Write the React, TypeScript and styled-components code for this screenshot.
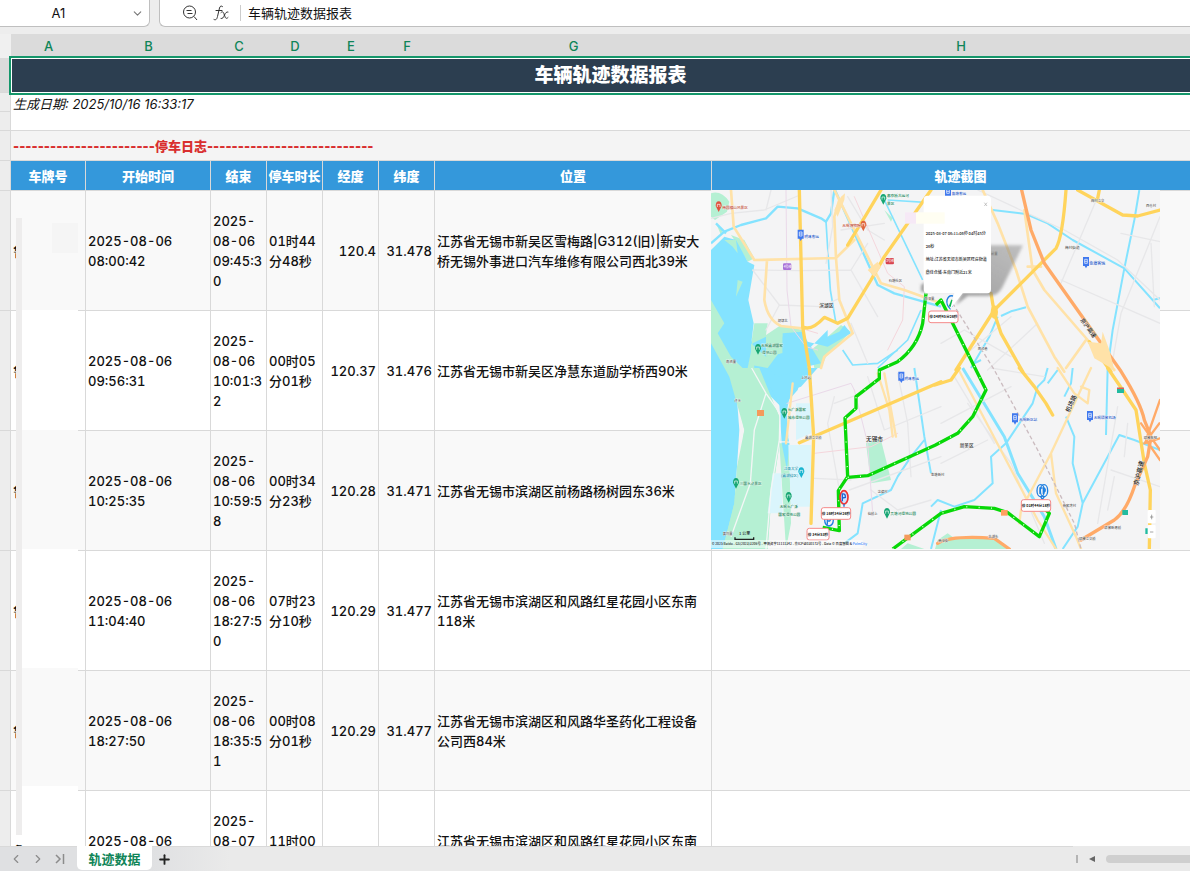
import React from "react";
import styled, { createGlobalStyle } from "styled-components";
import { ChevronDown, ChevronLeft, ChevronRight, Plus } from "lucide-react";

const GlobalStyle = createGlobalStyle`
  * { box-sizing: border-box; }
  body {
    margin: 0;
    background: #fff;
    color: #111;
    font-family: Inter, "Noto Sans CJK SC", sans-serif;
    font-size: 13px;
  }
  button, input { font: inherit; color: inherit; border: 0; padding: 0; background: none; }
`;

const GREEN = "#0f8558";
const LINE = "#d9d9d9";

const App = styled.div`
  display: flex;
  flex-direction: column;
  height: 100vh;
  overflow: hidden;
  background: #ededed;
`;

const FormulaBar = styled.header`
  display: flex;
  flex: none;
  gap: 9px;
  height: 34px;
  padding-bottom: 7px;
`;

const NameBox = styled.div`
  display: flex;
  align-items: center;
  width: 150px;
  background: #fff;
  border: solid #bfbfbf;
  border-width: 0 1px 1px 0;
  border-radius: 0 0 6px 0;
`;

const NameInput = styled.input`
  flex: 1;
  min-width: 0;
  padding-right: 8px;
  text-align: center;
`;

const IconButton = styled.button<{ $width: number }>`
  display: flex;
  align-items: center;
  justify-content: center;
  width: ${(p) => p.$width}px;
`;

const FormulaBox = styled.div`
  display: flex;
  flex: 1;
  align-items: center;
  padding-left: 15px;
  background: #fff;
  border: solid #bfbfbf;
  border-width: 0 0 1px 1px;
  border-radius: 0 0 0 6px;
`;

const FormulaInput = styled.input`
  flex: 1;
  height: 16px;
  margin-left: 4px;
  padding: 0 0 2px 7px;
  border-left: 1px solid #ccc;
`;

const Sheet = styled.main`
  flex: 1;
  min-height: 0;
  overflow: hidden;
`;

const Grid = styled.table`
  position: relative;
  width: calc(100% + 20px);
  table-layout: fixed;
  border-collapse: separate;
  border-spacing: 0;
`;

const Corner = styled.th`
  background: #f0f0f0;
`;

const ColumnHead = styled.th`
  height: 24px;
  padding: 0;
  background: #dbdbdb;
  color: ${GREEN};
  font-size: 13px;
  font-weight: 500;
`;

const RowHead = styled.th<{ $active?: boolean }>`
  padding: 0;
  background: ${(p) => (p.$active ? "#dbdbdb" : "#ededed")};
  border: solid ${LINE};
  border-width: 0 1px 1px 0;
`;

const TitleCell = styled.td`
  position: relative;
  z-index: 1;
  height: 35px;
  padding: 0;
  border: 1px solid #fff;
  outline: 2px solid #14966a;
  background: #2c3e50;
  color: #fff;
  font-size: 19px;
  font-weight: 900;
  line-height: 24px;
  text-align: center;
`;

const Row = styled.tr<{ $height: number }>`
  height: ${(p) => p.$height}px;
`;

const DateCell = styled.td`
  padding: 2px;
  background: #fff;
  border-bottom: 1px solid ${LINE};
  font-style: italic;
  font-size: 13px;
  line-height: 18px;
  vertical-align: top;
`;

const SectionCell = styled.td`
  padding: 0 2px 1px;
  background: #f4f4f4;
  border-bottom: 1px solid ${LINE};
  color: #d92f2f;
  font-weight: 900;
`;

const FieldHead = styled.th`
  padding: 0 0 1px;
  background: #3498db;
  border: solid ${LINE};
  border-width: 0 1px 1px 0;
  color: #fff;
  font-weight: 900;
  white-space: nowrap;
`;

const Cell = styled.td<{ $striped: boolean; $right?: boolean }>`
  position: relative;
  padding: 0 2px;
  background: ${(p) => (p.$striped ? "#f9f9f9" : "#fff")};
  border: solid ${LINE};
  border-width: 0 1px 1px 0;
  font-weight: 500;
  font-variant-numeric: tabular-nums;
  line-height: 20px;
  text-align: ${(p) => (p.$right ? "right" : "left")};
  white-space: nowrap;
`;

const Line = styled.div``;

const PlateMask = styled.span<{ $striped: boolean; $top: number; $height: number }>`
  position: absolute;
  top: ${(p) => p.$top}px;
  left: 5px;
  width: 62px;
  height: ${(p) => p.$height}px;
  background: ${(p) => (p.$striped ? "#f9f9f9" : "#fff")};
  border-left: 6px solid #eeeded;
`;

const PlatePatch = styled.span`
  position: absolute;
  top: 5px;
  right: 0;
  width: 26px;
  height: 30px;
  background: #f5f5f5;
`;

const MapPicture = styled.svg`
  position: absolute;
  z-index: 2;
  top: -1px;
  left: -1px;
  width: 449px;
  height: 359px;
  font-family: "Noto Sans CJK SC", sans-serif;
`;

const Label = styled.text<{ $size?: number }>`
  font-size: ${(p) => p.$size ?? 14}px;
  font-weight: 500;
  stroke: #fff;
  stroke-width: 1px;
  paint-order: stroke;
`;

const Footer = styled.footer`
  display: flex;
  flex: none;
  height: 25px;
  background: linear-gradient(90deg, #dfe0e2 0, #dfe0e2 150px, #eaeaea 230px);
`;

const SheetNav = styled.nav`
  display: flex;
  flex: 1;
  border-top: 1px solid ${LINE};
  padding-left: 5px;
  color: #8c8c8c;
`;

const SheetTab = styled.button`
  width: 75px;
  height: 24px;
  margin: -1px 0 0 6px;
  background: #fff;
  border-radius: 0 0 5px 5px;
  color: ${GREEN};
  font-weight: 700;
`;

const ScrollArea = styled.div`
  display: flex;
  align-items: center;
  width: 117px;
  gap: 11px;
  padding-left: 3px;
`;

const SplitHandle = styled.span`
  width: 2px;
  height: 8px;
  background: #b4b4b4;
`;

const ScrollThumb = styled.span`
  flex: 1;
  height: 8px;
  background: #cfcfcf;
  border-radius: 4px 0 0 4px;
`;

const columns = [
  { letter: "A", width: 75, field: "车牌号" },
  { letter: "B", width: 125, field: "开始时间" },
  { letter: "C", width: 56, field: "结束" },
  { letter: "D", width: 56, field: "停车时长" },
  { letter: "E", width: 56, field: "经度" },
  { letter: "F", width: 56, field: "纬度" },
  { letter: "G", width: 277, field: "位置" },
  { letter: "H", width: 0, field: "轨迹截图" },
];

const records = [
  { start: ["2025-08-06", "08:00:42"], end: ["2025-", "08-06", "09:45:3", "0"], stay: ["01时44", "分48秒"], lng: "120.4", lat: "31.478", place: ["江苏省无锡市新吴区雪梅路|G312(旧)|新安大", "桥无锡外事进口汽车维修有限公司西北39米"] },
  { start: ["2025-08-06", "09:56:31"], end: ["2025-", "08-06", "10:01:3", "2"], stay: ["00时05", "分01秒"], lng: "120.37", lat: "31.476", place: ["江苏省无锡市新吴区净慧东道励学桥西90米"] },
  { start: ["2025-08-06", "10:25:35"], end: ["2025-", "08-06", "10:59:5", "8"], stay: ["00时34", "分23秒"], lng: "120.28", lat: "31.471", place: ["江苏省无锡市滨湖区前杨路杨树园东36米"] },
  { start: ["2025-08-06", "11:04:40"], end: ["2025-", "08-06", "18:27:5", "0"], stay: ["07时23", "分10秒"], lng: "120.29", lat: "31.477", place: ["江苏省无锡市滨湖区和风路红星花园小区东南", "118米"] },
  { start: ["2025-08-06", "18:27:50"], end: ["2025-", "08-06", "18:35:5", "1"], stay: ["00时08", "分01秒"], lng: "120.29", lat: "31.477", place: ["江苏省无锡市滨湖区和风路华圣药化工程设备", "公司西84米"] },
  { start: ["2025-08-06", "18:42:10"], end: ["2025-", "08-07", "05:42:1", "5"], stay: ["11时00", "分05秒"], lng: "120.29", lat: "31.477", place: ["江苏省无锡市滨湖区和风路红星花园小区东南", "118米"] },
];

// top and height of the cover over each licence plate
const masks = [
  [27, 92],
  [-1, 120],
  [-1, 119],
  [-2, 119],
  [-3, 119],
  [-5, 49],
];

const Lines = ({ items }: { items: string[] }) => (
  <>
    {items.map((t, i) => (
      <Line key={i}>{t}</Line>
    ))}
  </>
);

type Road = [color: string, width: number, d: string];

const roads: Road[] = [
  // minor streets
  ["#e7e7e9", 4, "M0 85L60 70L160 60L260 18M130 240L265 242L420 240L500 380M165 60L180 0M360 0L365 110L345 220M410 20L470 120L520 150M125 240L205 345L330 350L385 325M205 345L165 420M420 240L470 160M390 120L520 100M420 400L470 520"],
  ["#e7e7e9", 4, "M800 0L950 70L1060 120L1220 210L1347 330M1050 270L1347 400M1230 130L1347 155M1160 20L1050 280M1347 80L1230 370L1200 540M1320 160L1330 350M780 480L900 380M830 540L980 400M900 500L760 420L690 460"],
  ["#e7e7e9", 4, "M370 640L450 610M310 865L420 870M370 620L350 700L385 900M560 550L590 700L600 860M415 900L690 800M480 900L560 960L660 930M470 560L520 720L690 650M690 820L830 750M730 560L850 760M770 640L900 820L1000 1060M1200 840L1347 890M1210 860L1190 960M1220 650L1160 1000M690 700L900 590M840 534L1000 560M1250 700L1240 800"],
  ["#ead9e9", 3, "M225 0L228 300L240 410L285 470L320 480M228 640L420 580L430 600M430 600L470 760L485 970"],
  ["#f4d6dc", 3, "M430 20L530 250L580 290L575 390L530 480M270 415L320 430M310 790L480 770L560 730"],
  // pale yellow arteries
  ["#ffe2a8", 8, "M60 0L68 110L130 210L375 204L430 150M168 210L160 330Q170 390 210 408L280 416M375 204L385 330L425 430L340 500L330 534M385 30L370 80L375 204M370 0L510 280L580 300L690 340M485 240L510 220"],
  ["#ffe2a8", 8, "M815 0L860 100L915 240L950 350L1030 500L1060 545M940 60L965 240L1000 300L1130 450L1210 540M950 230L990 230M1125 450L1065 534"],
  ["#ffe2a8", 7, "M520 550L555 740M500 550L535 660L545 740M245 580L225 760M740 534L980 990L1035 1077M1140 534L1020 790L930 960L925 1000M1020 790L1035 910L1095 1040L1110 1077M1040 534L1090 610L1130 640L1135 600L1110 590"],
  // main yellow roads
  ["#ffd45c", 10, "M265 0L275 410L295 534M275 410Q300 425 340 382L380 400L410 385L480 270L520 200L660 0M510 0L465 75L410 165M1065 0Q1055 140 1035 175L960 250L850 360L735 540M840 310L850 370L870 430L935 545M1100 0L1235 75L1280 78L1347 60M1165 0L1160 25"],
  ["#ffd45c", 10, "M295 534L308 740L300 1000M265 758L690 575M672 585L720 570L745 534M925 534L970 590L1005 640L1025 675M1190 534L1235 600L1275 660L1300 820L1318 900L1315 1077M1135 455L1200 545"],
  // expressways
  ["#ffaa68", 10, "M932 0L960 120L1000 220L1110 375L1230 544Q1290 640 1300 690L1320 740L1310 800L1270 890Q1245 965 1210 990L1110 1050M680 1060Q720 1035 850 1045L895 1077"],
  ["#ffaa68", 7, "M1347 630L1305 750L1347 810M1347 745L1300 760L1345 700M1290 700L1347 780"],
];

const rivers: Road[] = [
  ["#84e3ff", 7, "M0 160L40 125L90 105L165 85L200 50L260 55L330 85L345 95L360 70L370 0M15 100L45 130M372 0L500 285L550 310L690 350"],
  ["#84e3ff", 5, "M345 95L358 300L375 400M520 30L635 270M630 360L590 450L500 534M395 480L425 525L500 520L560 480M530 30L690 40"],
  ["#84e3ff", 6, "M845 60L945 72L1010 100L1085 150L1240 235L1347 355M1285 0L1270 90L1240 235L1205 420L1190 534M1325 330L1347 325M860 380L835 440L780 534M790 520L810 510M870 378L900 364L945 352"],
  ["#84e3ff", 6, "M1010 534L1000 570L980 590L965 640L885 760L840 800L845 880L790 930L730 950L680 930L660 950M1040 540L1010 580M1085 534L1080 580L1060 620M1065 680L1090 740L1085 820L1115 940L1100 1010L1055 1077M1115 940L1225 735L1270 750L1347 780M1190 534L1185 735M690 960L660 1077"],
  ["#84e3ff", 9, "M755 534L880 740L920 850L1000 980L1035 1077"],
  ["#84e3ff", 6, "M610 534L640 740L660 850M640 750L600 800L560 860L540 900L455 940L440 1030L400 1060"],
];

const trackPath =
  "M645 310L635 400Q620 470 560 515L505 540L505 566L435 620L435 655L402 684L410 860L382 902L385 1022L335 1012M410 862L470 857L672 766L740 730L785 680L825 600L690 330L675 345M545 1077L690 970L760 950L850 955L890 968L985 1040L1015 970L1005 960";

type MapText = [x: number, y: number, text: string, color: string, size?: number];

const mapTexts: MapText[] = [
  [34, 56, "梅园横山风景区", "#c04a33", 11], [528, 22, "惠农桥古运河", "#0f8052", 11], [528, 44, "景区", "#0f8052", 11],
  [394, 112, "无锡博物院", "#c04a33", 11], [280, 143, "明珠客运", "#2c5bc8", 11], [325, 351, "滨湖区", "#333"],
  [200, 395, "胡埭北", "#555", 10], [533, 277, "石塘社区", "#555", 10], [150, 470, "无锡蠡湖国家", "#0f8052", 11],
  [153, 492, "湿地公园", "#0f8052", 11], [45, 520, "南池里", "#555", 10], [640, 330, "南深里", "#555", 10],
  [722, 14, "鱼塘客运", "#2c5bc8", 11], [1140, 36, "梅村立交", "#555", 10], [1305, 50, "西仓村", "#555", 10],
  [1062, 178, "梅村街道", "#555", 11], [1135, 225, "鱼塘客运", "#2c5bc8", 12], [800, 480, "周泾巷", "#555", 10],
  [830, 196, "坊前里", "#555", 10],
  [270, 566, "上风岩", "#555", 10], [580, 570, "明珠客运", "#2c5bc8", 11], [70, 636, "许水", "#555", 10],
  [230, 662, "长广溪国家", "#0f8052", 11], [230, 688, "城市湿地公园", "#0f8052", 11], [282, 748, "蠡湖立交桥", "#555", 10],
  [465, 754, "无锡市", "#222", 17], [218, 840, "江南大学", "#0c93ab", 11], [210, 862, "(蠡湖校区)", "#0c93ab", 11],
  [86, 884, "三国水浒景区", "#0f8052", 11], [206, 954, "无锡长广溪", "#0f8052", 11], [202, 978, "国家湿地公园", "#0f8052", 11],
  [500, 908, "达德村", "#555", 10], [470, 975, "仙桥上", "#555", 10], [538, 976, "贡塘河湿地公园", "#0f8052", 11],
  [35, 1034, "黄坞里", "#555", 10], [660, 858, "金塘新村", "#555", 10], [746, 772, "新吴区", "#333"],
  [924, 692, "无锡新区站", "#2c5bc8", 11], [1148, 688, "无锡硕放机场", "#2c5bc8", 11], [1298, 748, "硕放枢纽", "#555", 10],
  [1055, 950, "杨家湾村", "#555", 10], [1180, 1017, "硕放新港桥", "#555", 10], [1104, 1050, "硕放立交桥", "#555", 10],
  [832, 1045, "北湖头", "#555", 10], [682, 1056, "商业街", "#555", 10],
];

const pins: [number, number, string][] = [
  [23, 48, "#e0523f"], [457, 106, "#e0663f"], [517, 26, "#17a673"], [141, 476, "#17a673"], [220, 668, "#17a673"],
  [75, 878, "#17a673"], [233, 920, "#17a673"], [528, 968, "#17a673"], [271, 846, "#18b4cf"],
];

const stations: [number, number][] = [
  [269, 134], [711, 6], [1125, 216], [571, 560], [912, 685], [1137, 678],
];

const stops: [number, number, string][] = [
  [653, 363, "停 04时45分26秒"], [331, 953, "停 16时34分26秒"], [288, 1015, "停 34分53秒"], [931, 929, "停 01时44分18秒"],
];

const RouteMap = () => (
  <MapPicture viewBox="0 0 1347 1077" role="img" aria-label="轨迹截图" preserveAspectRatio="none">
    <rect width="1347" height="1077" fill="#f4f4f5" />
    <g fill="#b5f0d3">
      <path d="M0 10Q30 0 55 35L48 65L12 90L0 80ZM60 135L100 150L130 205L110 215L70 150ZM520 60L545 85L555 60L540 95ZM15 100L35 120L30 135Z" />
      <path d="M130 400L170 400L165 435L210 405L275 420L290 534L330 534L345 500L420 425L390 405L350 440L300 480L310 534L220 560L110 530Z" />
      <path d="M0 390L30 460L60 420L80 500L140 534L205 680L205 760L180 940L170 1077L30 1077L75 900L100 720L60 534L0 470Z" />
      <path d="M465 760L510 750L540 870L480 880ZM205 760L235 760L240 1000L225 1077ZM680 1050L710 1030L730 1045L850 1045L890 1077L672 1077ZM590 1060L640 1077L570 1077Z" />
    </g>
    <g fill="#84e3ff">
      <path d="M0 180L40 140L75 150L110 215L130 225L112 330L128 400L122 450L130 534L160 600L210 650L220 740L232 740L225 640L260 600L270 570L245 540L330 520L300 470L350 420L350 440L385 425L400 405L420 430L350 470L290 455L275 425L215 430L215 490L165 500L165 440L125 460L110 534L60 534L75 590L85 720L78 830L70 940L45 1040L35 1077L0 1077Z" />
      <path d="M145 534L205 640L212 760L228 840L235 760L222 690L240 600L270 590L320 534Z" />
      <path d="M215 440L278 425L290 534L200 560L165 534L170 500L215 490Z" />
    </g>
    <g fill="#b5f0d3">
      <path d="M0 330L40 400L20 430L60 500L95 534L145 534L205 680L208 750L180 930L170 1077L35 1077L70 940L78 830L100 720L55 560L0 460ZM40 150L75 150L80 190L65 170ZM80 270L95 275L75 320ZM120 460L165 500L210 480L170 534L120 525Z" />
    </g>
    <path d="M232 765L300 765L300 950L240 950ZM255 640L300 640L300 730L255 750ZM185 850L210 850L215 970L170 970Z" fill="#daf5fc" />
    {rivers.map(([color, width, d], i) => (
      <path key={i} d={d} stroke={color} strokeWidth={width} fill="none" strokeLinejoin="round" />
    ))}
    <path d="M122 534L165 610L207 670L205 750L180 900L165 1077M165 610L130 720L118 880L60 1040M205 755L265 758" stroke="#f4f6f6" strokeWidth="4" fill="none" />
    {roads.map(([color, width, d], i) => (
      <path key={i} d={d} stroke={color} strokeWidth={width} fill="none" strokeLinejoin="round" strokeLinecap="round" />
    ))}
    <g fill="#ffe2a8">
      <path d="M370 60L390 20L402 10L400 30L380 80ZM470 240L500 215L510 230L490 260ZM1130 455L1170 460L1175 425L1195 480L1210 540L1150 505Z" />
    </g>
    <ellipse cx="850" cy="366" rx="11" ry="20" fill="#ffd45c" />
    <path d="M725 340L850 540L980 780L1090 1000L1110 1077" stroke="#cbbcc0" strokeWidth="4" strokeDasharray="12 8" fill="none" />
    <path d={trackPath} stroke="#07d807" strokeWidth="10" fill="none" strokeLinejoin="round" />
    <path d={trackPath} stroke="#e8ffe8" strokeWidth="4" strokeDasharray="3 34" fill="none" />
    <g>
      {pins.map(([x, y, color]) => (
        <g key={`${x}-${y}`}>
          <path d={`M${x} ${y + 18}L${x - 9} ${y}A9 14 0 1 1 ${x + 9} ${y}Z`} fill={color} />
          <path d={`M${x - 4} ${y + 3}V${y - 5}H${x + 4}V${y + 3}`} stroke="#fff" strokeWidth="2" fill="none" />
        </g>
      ))}
      {stations.map(([x, y]) => (
        <g key={`${x}-${y}`}>
          <path d={`M${x - 9} ${y - 15}H${x + 9}V${y + 12}H${x + 4}L${x} ${y + 19}L${x - 4} ${y + 12}H${x - 9}Z`} fill="#3f78ee" />
          <path d={`M${x - 4} ${y - 8}H${x + 4}V${y + 4}H${x - 4}ZM${x - 4} ${y - 2}H${x + 4}`} stroke="#fff" strokeWidth="2" fill="none" />
        </g>
      ))}
    </g>
    <g>
      <rect x="216" y="220" width="25" height="20" rx="4" fill="#a971d8" />
      <rect x="524" y="204" width="25" height="19" rx="4" fill="#d8434f" />
      <rect x="138" y="660" width="21" height="18" fill="#f49a5b" />
      <rect x="580" y="1034" width="19" height="17" fill="#f49a5b" />
      <rect x="870" y="960" width="20" height="17" fill="#ffa060" />
      <path d="M1218 593H1239V609H1218ZM1234 960H1251V975H1234ZM1303 1015H1316V1032H1303Z" fill="#22bba0" />
      <path d="M1218 593H1239V597H1218Z" fill="#e55" />
      <text x="218" y="234" fontSize="9" fill="#fff">4号线</text>
      <text x="526" y="217" fontSize="9" fill="#fff">3号线</text>
    </g>
    {mapTexts.map(([x, y, text, color, size]) => (
      <Label key={`${x}-${y}`} x={x} y={y} fill={color} $size={size}>
        {text}
      </Label>
    ))}
    <g>
      <Label transform="translate(1107 390) rotate(54)" fill="#222" $size={17}>京沪高速</Label>
      <Label transform="translate(1075 668) rotate(-66)" fill="#222" $size={18}>机场路</Label>
      <Label transform="translate(1281 888) rotate(-76)" fill="#222" $size={19}>京沪高速</Label>
    </g>
    <g fill="none" stroke="#1f7fe0" strokeWidth="4">
      <path d="M719 358Q705 345 708 330Q713 314 726 318M722 350L732 325" />
      <ellipse cx="354" cy="990" rx="13" ry="18" />
      <path d="M349 1004V982H356Q362 987 356 993H349" />
      <ellipse cx="989" cy="902" rx="11" ry="18" />
      <ellipse cx="999" cy="902" rx="11" ry="18" />
      <path d="M987 912V894H994M997 912V894Q1005 896 1002 904H997M989 920L994 928L1000 920" />
    </g>
    <path d="M717 350L725 330" stroke="#07b84a" strokeWidth="8" />
    <ellipse cx="399" cy="922" rx="12" ry="20" fill="#cfe4ff" stroke="#e33" strokeWidth="5" />
    <path d="M394 934V912Q404 910 403 922L394 924M399 942V950" stroke="#1f62d0" strokeWidth="4" fill="none" />
    {stops.map(([x, y, text]) => {
      const width = text.length > 8 ? 88 : 66;
      return (
        <g key={text}>
          <rect x={x} y={y} width={width} height="35" rx="7" fill="#fff" stroke="#f58a8a" strokeWidth="3" />
          <text x={x + width / 2} y={y + 22} textAnchor="middle" fontSize="11" fontWeight="700" fill="#222">{text}</text>
        </g>
      );
    })}
    <defs>
      <linearGradient id="popup-shadow" x1="0" y1="1" x2="1" y2="0">
        <stop offset="0" stopColor="#777" stopOpacity="0.75" />
        <stop offset="1" stopColor="#888" stopOpacity="0.5" />
      </linearGradient>
      <filter id="soft"><feGaussianBlur stdDeviation="4" /></filter>
    </defs>
    <path d="M820 166H936L875 290Q862 318 830 318H770L735 345L755 305H630V285Z" fill="url(#popup-shadow)" filter="url(#soft)" />
    <path d="M650 17H828Q840 17 840 29V298Q840 310 828 310H755L717 358L730 310H650Q638 310 638 298V29Q638 17 650 17Z" fill="#fff" />
    <rect x="582" y="67" width="33" height="34" fill="#f6e9f6" />
    <rect x="615" y="67" width="86" height="34" fill="#fffef2" />
    <g fontSize="12" fontWeight="500" fill="#222">
      <text x="644" y="136">2025-08-07 06:11:06停 04时45分</text>
      <text x="644" y="175">26秒</text>
      <text x="644" y="213">地址:江苏省无锡市新吴区旺庄街道</text>
      <text x="644" y="252">鼎佳仓储-东南门附近21米</text>
    </g>
    <path d="M820 38L828 48M828 38L820 48" stroke="#aaa" strokeWidth="2" />
    <g fill="#222" fontSize="12" fontWeight="500">
      <text x="84" y="1034">1 公里</text>
      <path d="M72 1042V1048H128V1042" stroke="#222" strokeWidth="4" fill="none" />
      <rect x="0" y="1050" width="455" height="24" fill="#fff" fillOpacity="0.5" />
      <text x="2" y="1066" fontSize="10">© 2025 Baidu - GS(2023)3206号 - 甲测资字11111342 - 京ICP证030173号 - Data © 百度智图 &amp; <tspan fill="#3385ff">PalmCity</tspan></text>
    </g>
    <g>
      <rect x="1310" y="960" width="24" height="40" rx="3" fill="#fff" />
      <rect x="1310" y="1005" width="24" height="40" rx="3" fill="#fff" />
      <path d="M1317 981H1327M1322 974V988M1317 1026H1327" stroke="#777" strokeWidth="2" />
    </g>
  </MapPicture>
);

export default function SpreadsheetPage() {
  return (
    <App>
      <GlobalStyle />
      <FormulaBar>
        <NameBox>
          <NameInput aria-label="单元格" defaultValue="A1" />
          <IconButton type="button" $width={24} aria-label="展开">
            <ChevronDown size={13} strokeWidth={2} color="#777" />
          </IconButton>
        </NameBox>
        <FormulaBox>
          <IconButton type="button" $width={30} aria-label="缩小">
            <svg width="16" height="16" viewBox="0 0 32 32" fill="none" stroke="#333" strokeWidth="2">
              <circle cx="15" cy="14" r="12" />
              <path d="M9 11H19M11 17H21M24 23L30 30" />
            </svg>
          </IconButton>
          <IconButton type="button" $width={31} aria-label="插入函数">
            <svg width="16" height="18" viewBox="0 0 32 36" fill="none" stroke="#333" strokeWidth="2" strokeLinecap="round">
              <path d="M2 31C6 33 8 30 9 25L13 8C14 4 17 3 19 5M6 13H18" />
              <path d="M16 17C19 14 21 16 22 20L24 25C25 29 27 30 30 27M30 16C27 15 25 18 23 22C21 27 19 30 16 29" />
            </svg>
          </IconButton>
          <FormulaInput aria-label="编辑栏" defaultValue="车辆轨迹数据报表" />
        </FormulaBox>
      </FormulaBar>

      <Sheet>
        <Grid>
          <colgroup>
            <col width={11} />
            {columns.map((c) => (
              <col key={c.letter} width={c.width || undefined} />
            ))}
          </colgroup>
          <thead>
            <tr>
              <Corner />
              {columns.map((c) => (
                <ColumnHead key={c.letter} scope="col">{c.letter}</ColumnHead>
              ))}
            </tr>
          </thead>
          <tbody>
            <Row $height={35}>
              <RowHead $active />
              <TitleCell colSpan={8}>车辆轨迹数据报表</TitleCell>
            </Row>
            <Row $height={19}>
              <RowHead />
              <DateCell colSpan={8} rowSpan={2}>生成日期: 2025/10/16 16:33:17</DateCell>
            </Row>
            <Row $height={19}>
              <RowHead />
            </Row>
            <Row $height={30}>
              <RowHead />
              <SectionCell colSpan={8}>{"-".repeat(23)}停车日志{"-".repeat(27)}</SectionCell>
            </Row>
            <Row $height={30}>
              <RowHead />
              {columns.map((c) => (
                <FieldHead key={c.letter} scope="col">{c.field}</FieldHead>
              ))}
            </Row>
            {records.map((r, i) => {
              const striped = i % 2 === 0;
              const [top, height] = masks[i];
              return (
                <Row key={i} $height={120}>
                  <RowHead />
                  <Cell $striped={striped}>
                    鲁
                    <PlateMask $striped={striped} $top={top} $height={height}>
                      {i === 0 && <PlatePatch />}
                    </PlateMask>
                  </Cell>
                  <Cell $striped={striped}><Lines items={r.start} /></Cell>
                  <Cell $striped={striped}><Lines items={r.end} /></Cell>
                  <Cell $striped={striped}><Lines items={r.stay} /></Cell>
                  <Cell $striped={striped} $right>{r.lng}</Cell>
                  <Cell $striped={striped} $right>{r.lat}</Cell>
                  <Cell $striped={striped}><Lines items={r.place} /></Cell>
                  <Cell $striped={striped}>{i === 0 && <RouteMap />}</Cell>
                </Row>
              );
            })}
          </tbody>
        </Grid>
      </Sheet>

      <Footer>
        <SheetNav aria-label="工作表">
          <IconButton type="button" $width={22} aria-label="上一个"><ChevronLeft size={14} /></IconButton>
          <IconButton type="button" $width={22} aria-label="下一个"><ChevronRight size={14} /></IconButton>
          <IconButton type="button" $width={22} aria-label="最后一个">
            <svg width="12" height="12" viewBox="0 0 24 24" fill="none" stroke="currentColor" strokeWidth="3">
              <path d="M4 4L12 12L4 20M19 2V22" />
            </svg>
          </IconButton>
          <SheetTab type="button">轨迹数据</SheetTab>
          <IconButton type="button" $width={24} aria-label="新建工作表"><Plus size={15} strokeWidth={3} color="#222" /></IconButton>
        </SheetNav>
        <ScrollArea>
          <SplitHandle />
          <svg width="6" height="6" viewBox="0 0 6 6"><path d="M6 0V6L0 3Z" fill="#666" /></svg>
          <ScrollThumb />
        </ScrollArea>
      </Footer>
    </App>
  );
}
